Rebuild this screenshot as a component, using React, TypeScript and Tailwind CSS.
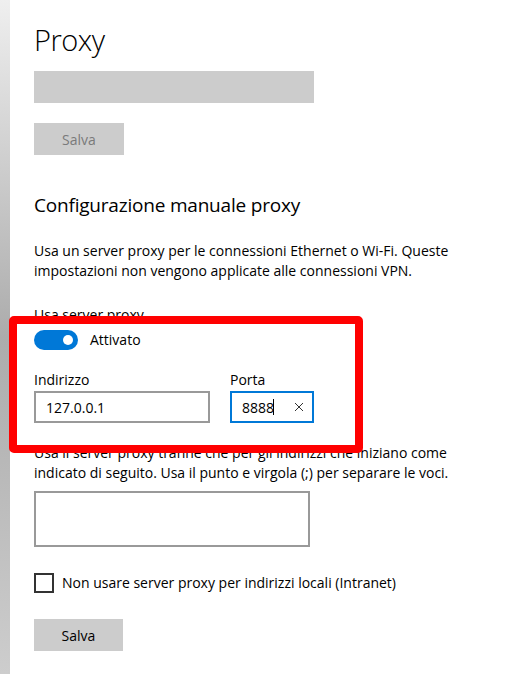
export default function App() {
    return (
        <div
            className="relative flex h-[674px] w-[529px] overflow-hidden bg-white text-[#000]"
            style={{ fontFamily: '"Open Sans", "Noto Sans", sans-serif' }}
        >
            {/* Left edge strip */}
            <div className="w-[10px] shrink-0 bg-linear-to-b from-[#efefef] via-[#acacac] to-[#cdcdcd]" />

            {/* Content */}
            <div className="flex flex-col pl-[24px]">
                <h1 className="mt-[20px] text-[29px] leading-[40px] font-light tracking-[-0.5px]">Proxy</h1>
                <div className="mt-[11px] h-[32px] w-[280px] bg-[#cccccc]" />
                <button className="mt-[20px] h-[32px] w-[90px] bg-[#cccccc] text-[14px] text-[#7a7a7a]">
                    Salva
                </button>

                <h2 className="mt-[36px] text-[19px] leading-[28px] tracking-[-0.2px]">Configurazione manuale proxy</h2>
                <p className="mt-[22px] text-[14px] leading-[20px]">
                    Usa un server proxy per le connessioni Ethernet o Wi-Fi. Queste
                    <br />
                    impostazioni non vengono applicate alle connessioni VPN.
                </p>

                <p className="mt-[24px] text-[14px] leading-[20px]">Usa server proxy</p>
                <div className="mt-[5px] flex items-center gap-[12px]">
                    <div className="flex h-[20px] w-[44px] items-center justify-end rounded-full bg-[#0078d7] pr-[5px]">
                        <div className="h-[10px] w-[10px] rounded-full bg-white" />
                    </div>
                    <span className="text-[14px] leading-[20px]">Attivato</span>
                </div>

                <div className="mt-[20px] flex gap-[20px]">
                    <div className="flex flex-col">
                        <label className="text-[14px] leading-[20px]">Indirizzo</label>
                        <div className="mt-[1px] flex h-[32px] w-[176px] items-center border-2 border-[#999999] px-[10px] text-[14px]">
                            127.0.0.1
                        </div>
                    </div>
                    <div className="flex flex-col">
                        <label className="text-[14px] leading-[20px]">Porta</label>
                        <div className="mt-[1px] flex h-[32px] w-[84px] items-center border-2 border-[#0078d7] pl-[10px] pr-[8px] text-[14px]">
                            <span>8888</span>
                            <span className="-ml-[1px] h-[16px] w-[1px] bg-black" />
                            <svg className="ml-auto" width="10" height="10" viewBox="0 0 10 10">
                                <path d="M1 1L9 9M9 1L1 9" stroke="#333" strokeWidth="1" />
                            </svg>
                        </div>
                    </div>
                </div>

                <p className="mt-[20px] text-[14px] leading-[20px]">
                    Usa il server proxy tranne che per gli indirizzi che iniziano come
                    <br />
                    indicato di seguito. Usa il punto e virgola (;) per separare le voci.
                </p>
                <div className="mt-[8px] h-[56px] w-[276px] border-2 border-[#999999]" />

                <label className="mt-[26px] flex items-center gap-[8px]">
                    <span className="h-[20px] w-[20px] border-2 border-[#333333]" />
                    <span className="text-[14px] leading-[20px]">
                        Non usare server proxy per indirizzi locali (Intranet)
                    </span>
                </label>

                <button className="mt-[26px] h-[32px] w-[89px] bg-[#cccccc] text-[14px]">Salva</button>
            </div>

            {/* Red highlight annotation */}
            <div className="absolute left-[9px] top-[316px] h-[137px] w-[354px] rounded-[5px] border-[8px] border-[#ff0000]" />
        </div>
    );
}
